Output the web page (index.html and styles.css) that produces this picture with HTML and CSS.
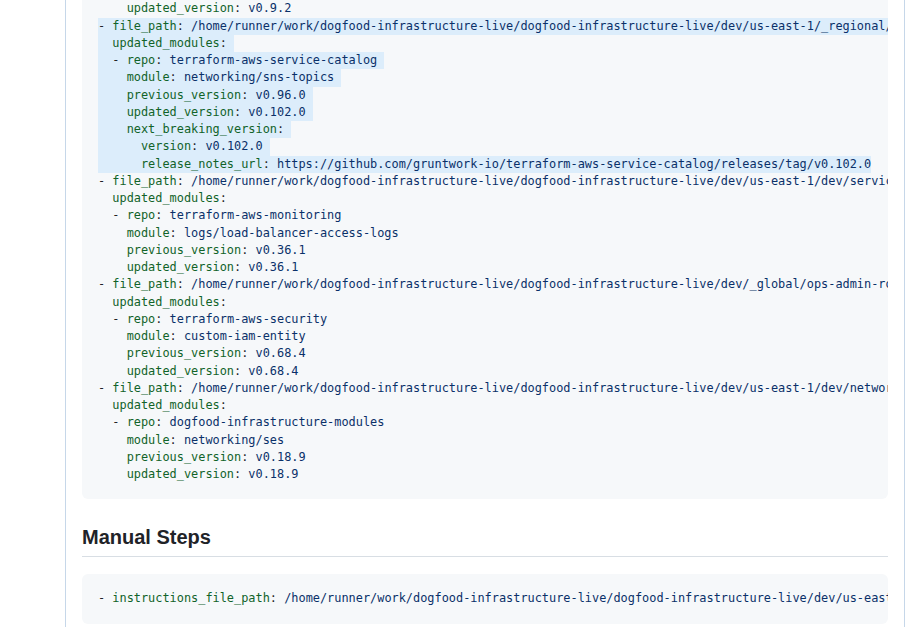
FILE: index.html
```html
<!DOCTYPE html>
<html lang="en">
<head>
<meta charset="utf-8">
<title>Dependency updates</title>
<link rel="stylesheet" href="styles.css">
</head>
<body>
<div class="comment">
<div class="markdown">
<pre class="code code-first"><code><span class="p">    </span><span class="k">updated_version</span><span class="p">: </span><span class="v">v0.9.2</span>
<span class="sel"><span class="p">- </span><span class="k">file_path</span><span class="p">: </span><span class="v">/home/runner/work/dogfood-infrastructure-live/dogfood-infrastructure-live/dev/us-east-1/_regional/sns-topics/terragrunt.hcl</span> </span>
<span class="sel"><span class="p">  </span><span class="k">updated_modules</span><span class="p">:</span> </span>
<span class="sel"><span class="p">  - </span><span class="k">repo</span><span class="p">: </span><span class="v">terraform-aws-service-catalog</span> </span>
<span class="sel"><span class="p">    </span><span class="k">module</span><span class="p">: </span><span class="v">networking/sns-topics</span> </span>
<span class="sel"><span class="p">    </span><span class="k">previous_version</span><span class="p">: </span><span class="v">v0.96.0</span> </span>
<span class="sel"><span class="p">    </span><span class="k">updated_version</span><span class="p">: </span><span class="v">v0.102.0</span> </span>
<span class="sel"><span class="p">    </span><span class="k">next_breaking_version</span><span class="p">:</span> </span>
<span class="sel"><span class="p">      </span><span class="k">version</span><span class="p">: </span><span class="v">v0.102.0</span> </span>
<span class="sel"><span class="p">      </span><span class="k">release_notes_url</span><span class="p">: </span><span class="v">https://github.com/gruntwork-io/terraform-aws-service-catalog/releases/tag/v0.102.0</span></span>
<span class="p">- </span><span class="k">file_path</span><span class="p">: </span><span class="v">/home/runner/work/dogfood-infrastructure-live/dogfood-infrastructure-live/dev/us-east-1/dev/services/alb/terragrunt.hcl</span>
<span class="p">  </span><span class="k">updated_modules</span><span class="p">:</span>
<span class="p">  - </span><span class="k">repo</span><span class="p">: </span><span class="v">terraform-aws-monitoring</span>
<span class="p">    </span><span class="k">module</span><span class="p">: </span><span class="v">logs/load-balancer-access-logs</span>
<span class="p">    </span><span class="k">previous_version</span><span class="p">: </span><span class="v">v0.36.1</span>
<span class="p">    </span><span class="k">updated_version</span><span class="p">: </span><span class="v">v0.36.1</span>
<span class="p">- </span><span class="k">file_path</span><span class="p">: </span><span class="v">/home/runner/work/dogfood-infrastructure-live/dogfood-infrastructure-live/dev/_global/ops-admin-role/terragrunt.hcl</span>
<span class="p">  </span><span class="k">updated_modules</span><span class="p">:</span>
<span class="p">  - </span><span class="k">repo</span><span class="p">: </span><span class="v">terraform-aws-security</span>
<span class="p">    </span><span class="k">module</span><span class="p">: </span><span class="v">custom-iam-entity</span>
<span class="p">    </span><span class="k">previous_version</span><span class="p">: </span><span class="v">v0.68.4</span>
<span class="p">    </span><span class="k">updated_version</span><span class="p">: </span><span class="v">v0.68.4</span>
<span class="p">- </span><span class="k">file_path</span><span class="p">: </span><span class="v">/home/runner/work/dogfood-infrastructure-live/dogfood-infrastructure-live/dev/us-east-1/dev/networking/ses/terragrunt.hcl</span>
<span class="p">  </span><span class="k">updated_modules</span><span class="p">:</span>
<span class="p">  - </span><span class="k">repo</span><span class="p">: </span><span class="v">dogfood-infrastructure-modules</span>
<span class="p">    </span><span class="k">module</span><span class="p">: </span><span class="v">networking/ses</span>
<span class="p">    </span><span class="k">previous_version</span><span class="p">: </span><span class="v">v0.18.9</span>
<span class="p">    </span><span class="k">updated_version</span><span class="p">: </span><span class="v">v0.18.9</span></code></pre>
<h2 class="heading">Manual Steps</h2>
<pre class="code"><code><span class="p">- </span><span class="k">instructions_file_path</span><span class="p">: </span><span class="v">/home/runner/work/dogfood-infrastructure-live/dogfood-infrastructure-live/dev/us-east-1/dev/networking/ses/README.md</span></code></pre>
</div>
</div>
</body>
</html>
```

FILE: styles.css
```css
html, body {
  margin: 0;
  padding: 0;
  background: #ffffff;
}

body {
  font-family: "Liberation Sans", Arial, sans-serif;
  color: #1f2328;
  overflow: hidden;
}

.comment {
  margin-left: 65px;
  width: 840px;
  box-sizing: border-box;
  border-left: 1px solid #c6d7e9;
  border-right: 1px solid #c6d7e9;
  padding: 0 16px;
  min-height: 640px;
}

.markdown {
  display: flow-root;
}

.code {
  margin: 0 0 16px 0;
  padding: 16px;
  background: #f6f8fa;
  border-radius: 6px;
  overflow: hidden;
  font-family: "DejaVu Sans Mono", "Liberation Mono", monospace;
  font-size: 11.9px;
  line-height: 1.45;
  white-space: pre;
  color: #1f2328;
}

.code-first {
  margin-top: -15.6px;
}

.code code {
  font-family: inherit;
  font-size: inherit;
}

.sel {
  display: inline-block;
  vertical-align: top;
  background: #dcedfb;
}

.k {
  color: #116329;
}

.v {
  color: #0a3069;
}

.p {
  color: #1f2328;
}

.heading {
  margin: 24px 0 17px 0;
  padding-bottom: 5px;
  border-bottom: 1px solid #d8dee4;
  font-size: 20px;
  line-height: 28px;
  font-weight: 700;
  color: #1f2328;
}
```
